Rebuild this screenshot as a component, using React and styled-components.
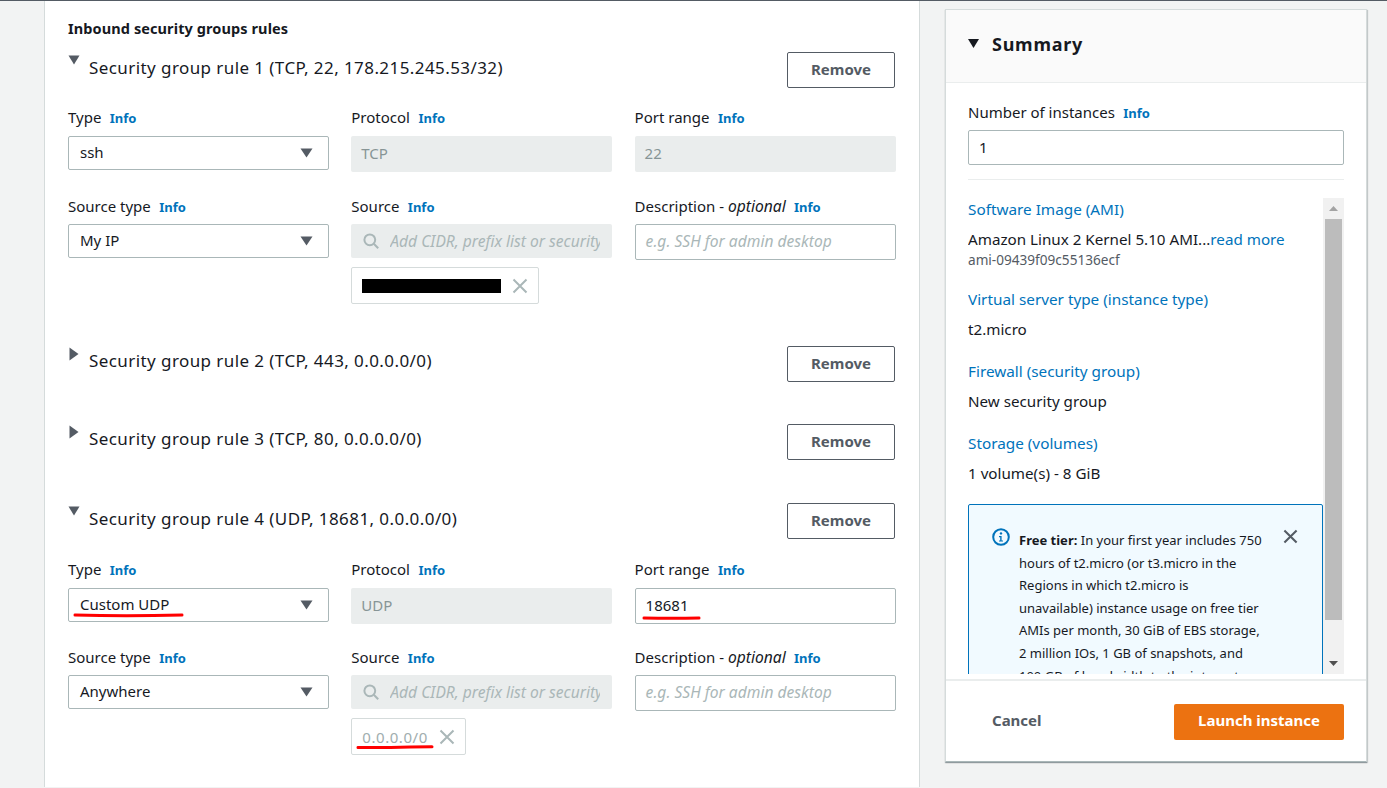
import React from "react";
import styled, { createGlobalStyle } from "styled-components";

const Global = createGlobalStyle`
  html, body { margin: 0; padding: 0; background: #f2f3f3; }
  body { font-family: "Noto Sans", "Open Sans", sans-serif; color: #16191f; overflow: hidden; }
  * { box-sizing: border-box; }
`;

const Page = styled.div`
  width: 1387px; height: 788px; display: flex; align-items: flex-start;
  padding-left: 44px; border-top: 1px solid #545b64; overflow: hidden;
`;
const Main = styled.main`
  width: 876px; height: 786px; flex: none; background: #fff;
  border-left: 1px solid #d5dbdb; border-right: 1px solid #d5dbdb;
  padding: 17px 23px 0 23px;
`;
const Heading = styled.h2`
  margin: 0 0 14px; font-size: 14.5px; line-height: 20px; font-weight: 700; letter-spacing: 0.1px;
`;
const Rule = styled.section`
  margin-bottom: ${p => p.$after}px;
`;
const RuleHead = styled.div`
  display: flex; align-items: flex-start; height: 36px; width: 827px;
`;
const Caret = styled.svg`
  width: 12px; height: 14px; flex: none; margin-top: ${p => (p.$open ? 3 : 1)}px; margin-right: 9px;
  fill: #545b64;
`;
const RuleTitle = styled.div`
  flex: 1; font-size: 17px; line-height: 24px; margin-top: ${p => (p.$open ? 4 : 3)}px; letter-spacing: 0.42px;
`;
const RemoveButton = styled.button`
  width: 108px; height: 36px; background: #fff; border: 1px solid #545b64; border-radius: 2px;
  font: 700 15px "Noto Sans", sans-serif; color: #545b64; padding: 0 0 3px;
`;
const Grid = styled.div`
  display: grid; grid-template-columns: 261px 261px 261px; column-gap: 22.3px; margin-top: ${p => p.$top}px;
`;
const Field = styled.div`
  min-width: 0; position: relative;
`;
const Label = styled.div`
  height: 18px; line-height: 16px; font-size: 15px; margin-bottom: ${p => p.$gap}px; white-space: nowrap;
  & i { font-size: 15.6px; }
`;
const Info = styled.a`
  font-size: 13px; font-weight: 700; color: #0073bb; margin-left: 4.5px;
`;
const Select = styled.div`
  height: 34px; display: flex; align-items: center; justify-content: space-between;
  padding: 0 15px 2px 11px; border: 1px solid #aab7b8; border-radius: 2px; background: #fff;
  font-size: 15px;
`;
const SelectCaret = styled.svg`
  width: 13px; height: 10px; fill: #545b64; margin-top: 2px;
`;
const Disabled = styled.div`
  height: 36px; display: flex; align-items: center; padding: 0 0 2px 10px;
  background: #eaeded; border-radius: 2px; color: #879596; font-size: 15px;
`;
const TextInput = styled.div`
  height: 36px; display: flex; align-items: center; padding: 0 0 2px 10px;
  background: #fff; border: 1px solid #aab7b8; border-radius: 2px;
  font-size: ${p => (p.$placeholder ? 15.6 : 15)}px;
  color: ${p => (p.$placeholder ? "#aab7b8" : "#16191f")};
  font-style: ${p => (p.$placeholder ? "italic" : "normal")};
`;
const SearchBox = styled.div`
  height: 34px; display: flex; align-items: center; padding: 0 12px 0 12px; gap: 11px;
  background: #eaeded; border-radius: 2px; overflow: hidden;
`;
const SearchText = styled.span`
  flex: 1; min-width: 0; overflow: hidden; white-space: nowrap; font-size: 15.6px; font-style: italic; color: #aab7b8;
`;
const Glyph = styled.svg`
  flex: none; width: ${p => p.$size}px; height: ${p => p.$size}px;
  fill: none; stroke: ${p => p.$color}; stroke-width: ${p => p.$stroke};
`;
const Token = styled.div`
  display: inline-flex; align-items: center; height: 37px; margin-top: 9px; padding: 0 10px;
  background: #fff; border: 1px solid #d5dbdb; border-radius: 2px; gap: 11px;
  font-size: 15px; letter-spacing: 0.55px; color: #a0adae;
`;
const Redacted = styled.span`
  display: block; width: 139px; height: 14px; background: #000;
`;
const Mark = styled.svg`
  position: absolute; left: ${p => p.$left}px; top: ${p => p.$top}px; overflow: visible;
  fill: none; stroke: #f00; stroke-width: 3; stroke-linecap: round;
`;

const Aside = styled.aside`
  width: 422px; height: 753px; flex: none; margin: 8px 0 0 25px; background: #fff;
  border: 1px solid #d5dbdb; border-bottom-color: #aab7b8;
  box-shadow: 0 1px 1px rgba(0, 28, 36, 0.3), 1px 1px 1px rgba(0, 28, 36, 0.15);
  display: flex; flex-direction: column;
`;
const AsideHead = styled.div`
  height: 73px; flex: none; display: flex; align-items: center; gap: 13px; padding: 0 0 5px 22px;
  background: #fafafa; border-bottom: 1px solid #eaeded;
  font-size: 18px; font-weight: 700; letter-spacing: 0.75px;
`;
const SummaryCaret = styled.svg`
  width: 11px; height: 9px; fill: #16191f;
`;
const AsideBody = styled.div`
  flex: 1; min-height: 0; display: flex; flex-direction: column; padding: 21px 22px 0 22px;
`;
const NumberInput = styled.div`
  height: 35px; display: flex; align-items: center; padding: 0 0 2px 10px; flex: none;
  border: 1px solid #aab7b8; border-radius: 2px; font-size: 15px;
`;
const Divider = styled.div`
  flex: none; height: 1px; background: #eaeded; margin: 14px 0 18px;
`;
const ScrollArea = styled.div`
  flex: 1; min-height: 0; display: flex; overflow: hidden;
`;
const ScrollContent = styled.div`
  width: 355px; flex: none; overflow: hidden; padding-top: 1px;
`;
const Scrollbar = styled.div`
  width: 21px; flex: none; background: #f1f1f1; display: flex; flex-direction: column; align-items: center;
`;
const ScrollButton = styled.div`
  width: 21px; height: 21px; flex: none; display: flex; align-items: center; justify-content: center;
`;
const ScrollTrack = styled.div`
  flex: 1; width: 17px; min-height: 0;
`;
const ScrollThumb = styled.div`
  width: 17px; height: 401px; background: #bcbcbc;
`;
const Item = styled.div`
  margin-bottom: ${p => p.$after}px;
`;
const ItemLink = styled.div`
  font-size: 15.3px; line-height: 20px; color: #0073bb;
`;
const ItemValue = styled.div`
  font-size: 15.2px; line-height: 20px; margin-top: 10px; white-space: nowrap;
`;
const ReadMore = styled.span`
  color: #0073bb;
`;
const ItemSub = styled.div`
  font-size: 13.6px; line-height: 16px; margin-top: 3px; color: #545b64;
`;
const Flash = styled.div`
  height: 300px; display: flex; padding: 23px 0 0 23px; background: #f1faff;
  border: 1px solid #0073bb; border-radius: 2px;
`;
const FlashIcon = styled.svg`
  width: 18px; height: 18px; flex: none; margin-right: 9px;
`;
const FlashText = styled.div`
  width: 244px; flex: none; font-size: 13px; line-height: 22.6px; margin-top: 1px;
  & b { font-weight: 700; }
`;
const FlashClose = styled.svg`
  width: 15px; height: 15px; flex: none; margin-left: 20px; margin-top: 1px;
  fill: none; stroke: #545b64; stroke-width: 2.2;
`;
const AsideFoot = styled.div`
  height: 82px; flex: none; display: flex; align-items: center; justify-content: space-between;
  padding: 2px 22px 0 46px; margin-top: 5px; border-top: 2px solid #eaeded;
`;
const Cancel = styled.span`
  font-size: 15px; font-weight: 700; color: #545b64; margin-bottom: 5px;
`;
const Launch = styled.button`
  width: 170px; height: 36px; border: 0; border-radius: 2px; background: #ec7211; color: #fff;
  font: 700 15px "Noto Sans", sans-serif; padding: 0 0 5px;
`;

const Cross = ({ size = 16, color = "#aab7b8", stroke = 2 }) => (
  <Glyph $size={size} $color={color} $stroke={stroke} viewBox="0 0 16 16"><path d="M1.5 1.5l13 13M14.5 1.5l-13 13" /></Glyph>
);
const Search = () => (
  <Glyph $size={16} $color="#aab7b8" $stroke={2} viewBox="0 0 16 16"><circle cx="6.8" cy="6.8" r="5.4" /><path d="M10.8 10.8l4.4 4.4" /></Glyph>
);
const Down = () => <SelectCaret viewBox="0 0 13 10"><path d="M0.5 0.5h12L6.5 9.5z" /></SelectCaret>;

const LabelRow = ({ gap, children }) => <Label $gap={gap}>{children}</Label>;

function ExpandedFields({ top, rowGap, type, source, port, token, mode, protocol }) {
  return (
    <>
      <Grid $top={top}>
        <Field>
          <LabelRow gap={9}>Type <Info>Info</Info></LabelRow>
          <Select>{type}<Down /></Select>
          {mode === "udp" && <Mark $left={5} $top={52} width="112" height="4"><path d="M2 2c30 .8 72 .8 107 0" /></Mark>}
        </Field>
        <Field>
          <LabelRow gap={9}>Protocol <Info>Info</Info></LabelRow>
          <Disabled>{protocol}</Disabled>
        </Field>
        <Field>
          <LabelRow gap={9}>Port range <Info>Info</Info></LabelRow>
          {mode === "udp" ? <TextInput>{port}</TextInput> : <Disabled>{port}</Disabled>}
          {mode === "udp" && <Mark $left={7} $top={55} width="60" height="4"><path d="M2 2c18 .4 38 .4 55 0" /></Mark>}
        </Field>
      </Grid>
      <Grid $top={rowGap}>
        <Field>
          <LabelRow gap={8}>Source type <Info>Info</Info></LabelRow>
          <Select>{source}<Down /></Select>
        </Field>
        <Field>
          <LabelRow gap={8}>Source <Info>Info</Info></LabelRow>
          <SearchBox><Search /><SearchText>Add CIDR, prefix list or security groups</SearchText></SearchBox>
          <Token>
            {token ? <span>{token}</span> : <Redacted />}
            <Cross />
          </Token>
          {token && <Mark $left={6} $top={96} width="76" height="4"><path d="M1 2.5c20 .6 50-.8 74-.8" /></Mark>}
        </Field>
        <Field>
          <LabelRow gap={8}>Description - <i>optional</i> <Info>Info</Info></LabelRow>
          <TextInput $placeholder>e.g. SSH for admin desktop</TextInput>
        </Field>
      </Grid>
    </>
  );
}

const RuleHeader = ({ open, title }) => (
  <RuleHead>
    <Caret $open={open} viewBox="0 0 12 14">
      {open ? <path d="M0.5 0.5h11L6 9.5z" /> : <path d="M1.5 0.5v13L10.5 7z" />}
    </Caret>
    <RuleTitle $open={open}>{title}</RuleTitle>
    <RemoveButton>Remove</RemoveButton>
  </RuleHead>
);

export default function App() {
  return (
    <>
      <Global />
      <Page>
        <Main>
          <Heading>Inbound security groups rules</Heading>
          <Rule $after={42}>
            <RuleHeader open title="Security group rule 1 (TCP, 22, 178.215.245.53/32)" />
            <ExpandedFields top={21} rowGap={26} type="ssh" source="My IP" port="22" protocol="TCP" />
          </Rule>
          <Rule $after={42}><RuleHeader title="Security group rule 2 (TCP, 443, 0.0.0.0/0)" /></Rule>
          <Rule $after={43}><RuleHeader title="Security group rule 3 (TCP, 80, 0.0.0.0/0)" /></Rule>
          <Rule $after={0}>
            <RuleHeader open title="Security group rule 4 (UDP, 18681, 0.0.0.0/0)" />
            <ExpandedFields top={22} rowGap={25} mode="udp" type="Custom UDP" source="Anywhere" port="18681" protocol="UDP" token="0.0.0.0/0" />
          </Rule>
        </Main>
        <Aside>
          <AsideHead>
            <SummaryCaret viewBox="0 0 11 9"><path d="M0 0h11L5.5 9z" /></SummaryCaret>
            Summary
          </AsideHead>
          <AsideBody>
            <Label $gap={8}>Number of instances <Info>Info</Info></Label>
            <NumberInput>1</NumberInput>
            <Divider />
            <ScrollArea>
              <ScrollContent>
                <Item $after={21}>
                  <ItemLink>Software Image (AMI)</ItemLink>
                  <ItemValue>Amazon Linux 2 Kernel 5.10 AMI...<ReadMore>read more</ReadMore></ItemValue>
                  <ItemSub>ami-09439f09c55136ecf</ItemSub>
                </Item>
                <Item $after={22}>
                  <ItemLink>Virtual server type (instance type)</ItemLink>
                  <ItemValue>t2.micro</ItemValue>
                </Item>
                <Item $after={22}>
                  <ItemLink>Firewall (security group)</ItemLink>
                  <ItemValue>New security group</ItemValue>
                </Item>
                <Item $after={21}>
                  <ItemLink>Storage (volumes)</ItemLink>
                  <ItemValue>1 volume(s) - 8 GiB</ItemValue>
                </Item>
                <Flash>
                  <FlashIcon viewBox="0 0 18 18">
                    <circle cx="9" cy="9" r="7.8" fill="none" stroke="#0073bb" strokeWidth="2" />
                    <circle cx="9" cy="5.4" r="1.2" fill="#0073bb" />
                    <path d="M7 8h2.6v4.4H11v1.2H7v-1.2h1.2V9.2H7z" fill="#0073bb" />
                  </FlashIcon>
                  <FlashText>
                    <b>Free tier:</b> In your first year includes 750 hours of t2.micro (or t3.micro in the Regions in which t2.micro is unavailable) instance usage on free tier AMIs per month, 30 GiB of EBS storage, 2 million IOs, 1 GB of snapshots, and 100 GB of bandwidth to the internet
                  </FlashText>
                  <FlashClose viewBox="0 0 16 16"><path d="M1.5 1.5l13 13M14.5 1.5l-13 13" /></FlashClose>
                </Flash>
              </ScrollContent>
              <Scrollbar>
                <ScrollButton><svg width="9" height="5" viewBox="0 0 9 5"><path d="M4.5 0L9 5H0z" fill="#a3a3a3" /></svg></ScrollButton>
                <ScrollTrack><ScrollThumb /></ScrollTrack>
                <ScrollButton><svg width="9" height="5" viewBox="0 0 9 5"><path d="M0 0h9L4.5 5z" fill="#505050" /></svg></ScrollButton>
              </Scrollbar>
            </ScrollArea>
          </AsideBody>
          <AsideFoot>
            <Cancel>Cancel</Cancel>
            <Launch>Launch instance</Launch>
          </AsideFoot>
        </Aside>
      </Page>
    </>
  );
}
